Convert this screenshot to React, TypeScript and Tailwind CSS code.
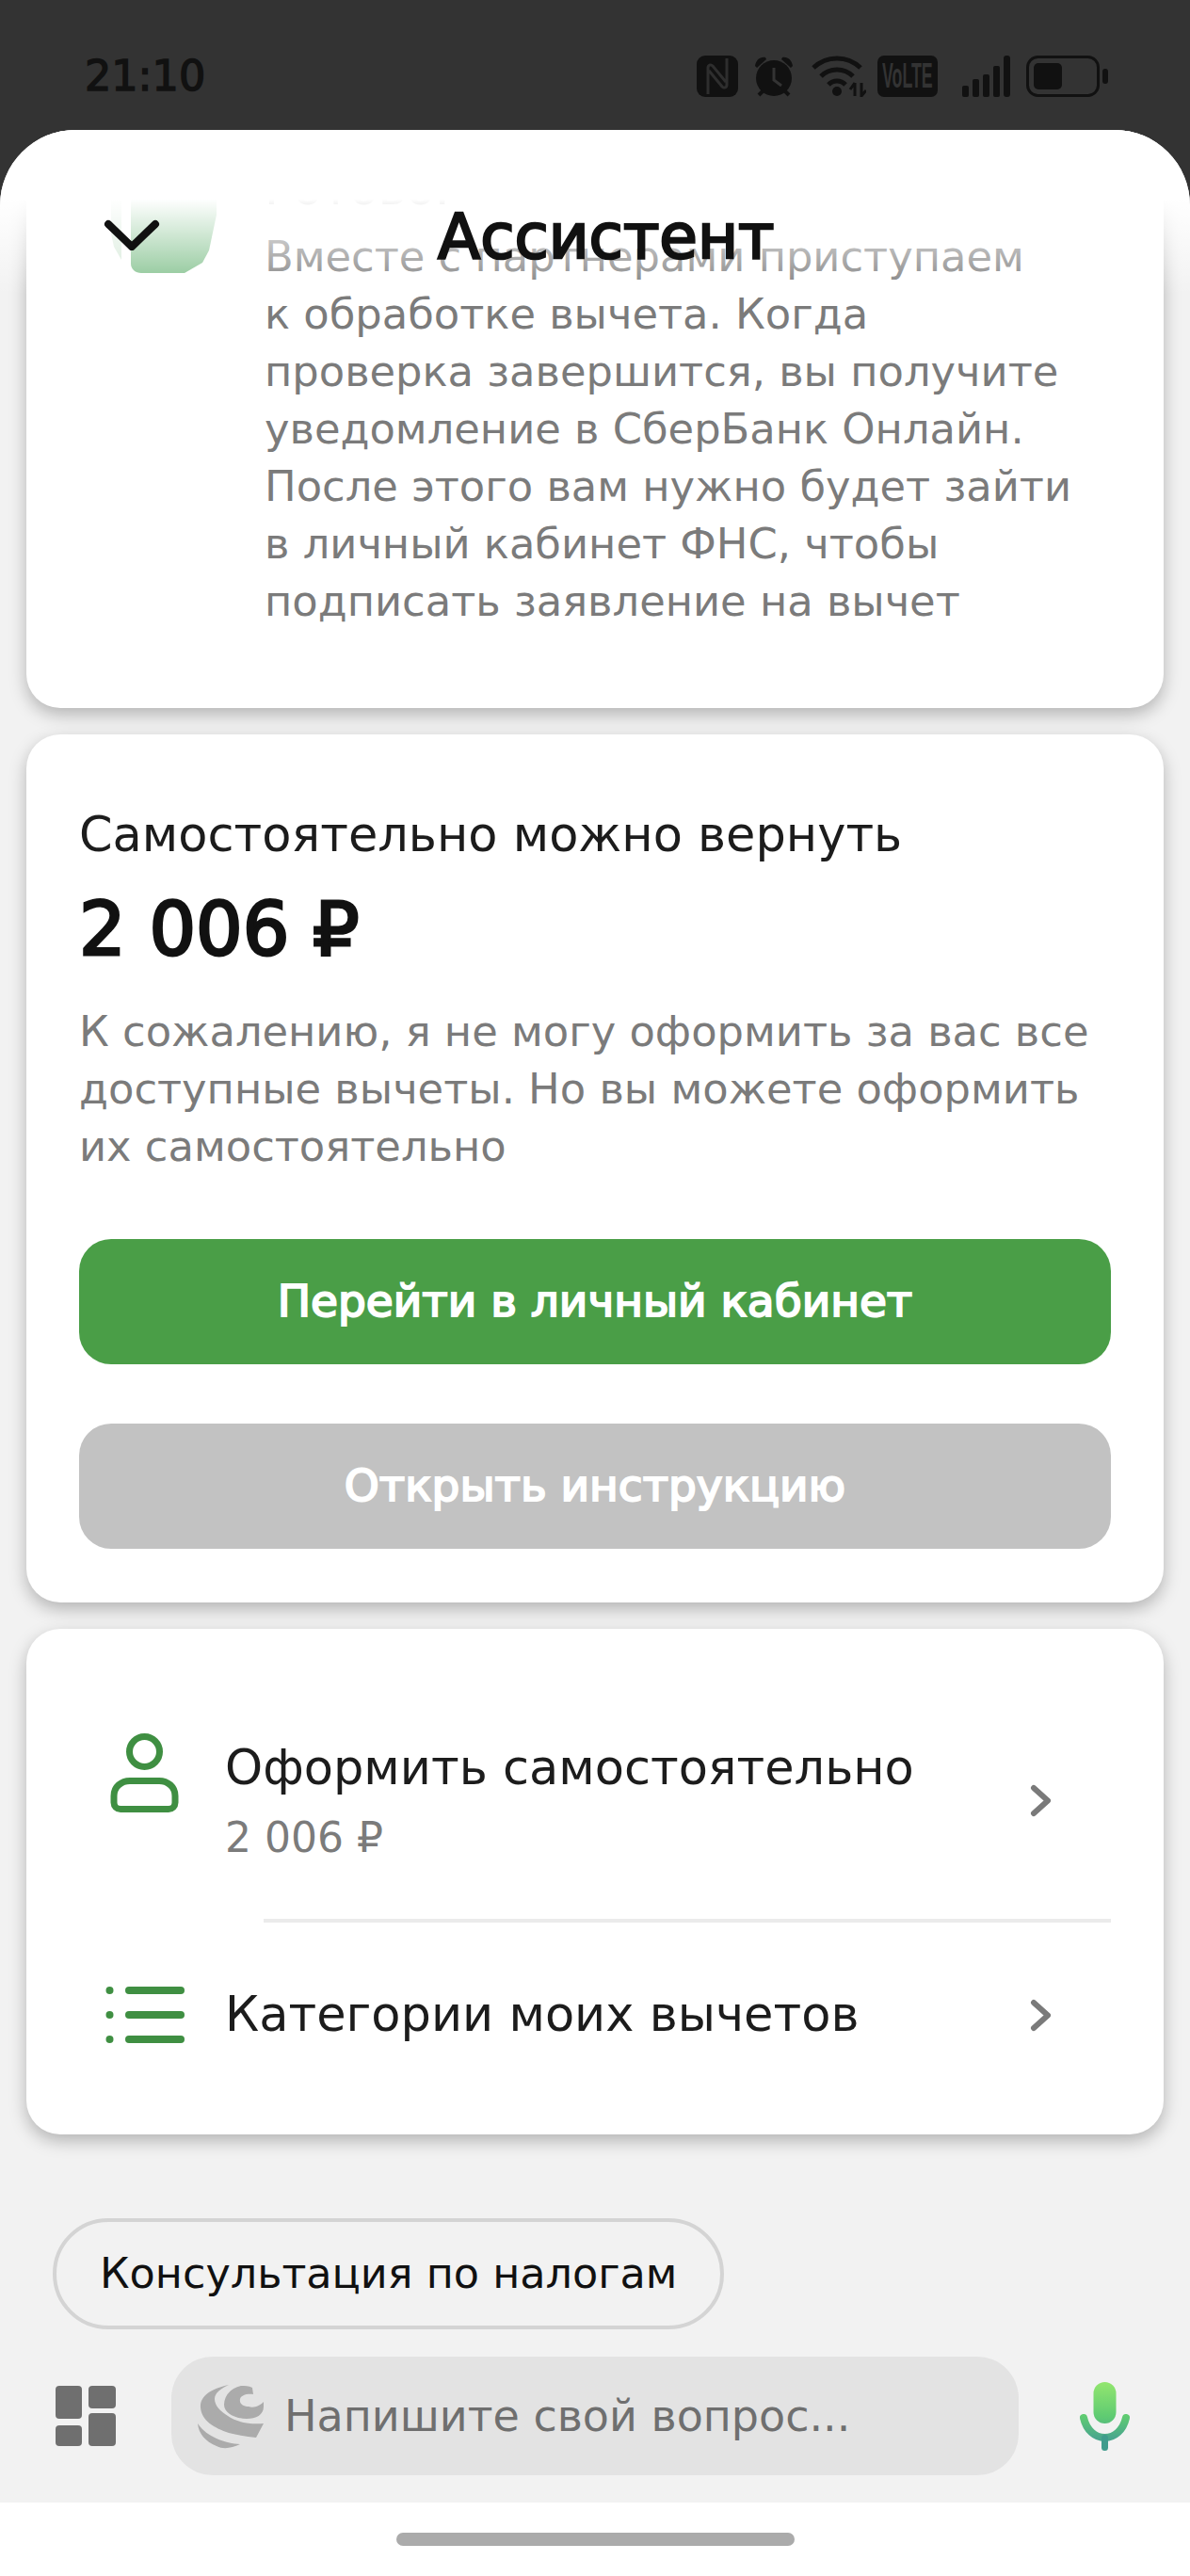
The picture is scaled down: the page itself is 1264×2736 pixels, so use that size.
const dv = "font-['DejaVu_Sans',sans-serif]";

function StatusIcons() {
  return (
    <div className="flex items-center text-[#111]">
      <svg width="44" height="44" viewBox="0 0 44 44">
        <rect width="44" height="44" rx="9" fill="#111" />
        <path d="M12 41V13c0-3 3-4 5-2L31 28M32 3V31c0 3-3 4-5 2L13 16" fill="none" stroke="#2e2e2e" strokeWidth="3" />
      </svg>
      <svg width="44" height="44" viewBox="0 0 44 44" className="ml-[17px]">
        <circle cx="21" cy="24" r="19" fill="#111" />
        <path d="M1 11C2 5 6 1 12 2L13 4 3 13zM41 11C40 5 36 1 30 2L29 4 39 13z" fill="#111" />
        <path d="M9 38l-4 4M33 38l4 4" stroke="#111" strokeWidth="4" />
        <path d="M21 13v13l8 6" fill="none" stroke="#333" strokeWidth="3" />
      </svg>
      <svg width="58" height="44" viewBox="0 0 58 44" className="ml-[17px]">
        <path d="M2 13a36 36 0 0 1 50 0M10 22a24 24 0 0 1 34 0M18 31a12 12 0 0 1 18 0" fill="none" stroke="#111" strokeWidth="5" />
        <circle cx="27" cy="38" r="5" fill="#111" />
        <path d="M46 29v14M41 36l5-7M53 29v14l5-6" fill="none" stroke="#111" strokeWidth="3" />
      </svg>
      <div className="ml-[12px] flex h-[44px] w-[64px] items-center justify-center overflow-hidden rounded-[7px] bg-[#111]">
        <span className="inline-block scale-x-[0.48] font-['Liberation_Sans',sans-serif] text-[37px] leading-[44px] font-bold whitespace-nowrap text-[#333]">VoLTE</span>
      </div>
      <svg width="51" height="44" viewBox="0 0 51 44" className="ml-[26px]">
        <rect x="0" y="32" width="7" height="12" rx="2" fill="#111" />
        <rect x="11" y="25" width="7" height="19" rx="2" fill="#111" />
        <rect x="22" y="20" width="7" height="24" rx="2" fill="#111" />
        <rect x="33" y="11" width="7" height="33" rx="2" fill="#111" />
        <rect x="44" y="0" width="7" height="44" rx="3" fill="#111" />
      </svg>
      <svg width="87" height="44" viewBox="0 0 87 44" className="ml-[17px]">
        <rect x="1.5" y="1.5" width="75" height="41" rx="11" fill="none" stroke="#111" strokeWidth="3" />
        <rect x="8" y="8" width="30" height="28" rx="5" fill="#111" />
        <rect x="81" y="14" width="6" height="16" rx="3" fill="#111" />
      </svg>
    </div>
  );
}

function Person() {
  return (
    <svg width="73" height="84" viewBox="0 0 73 84" fill="none" stroke="#3f8f42" strokeWidth="7">
      <circle cx="36.500" cy="19.500" r="16" />
      <path d="M11 80.500h51a7 7 0 0 0 7-7v-7c0-10-8-16-17-16H21c-9 0-17 6-17 16v7a7 7 0 0 0 7 7z" />
    </svg>
  );
}

function ListIcon() {
  return (
    <svg width="84" height="60" viewBox="0 0 84 60" fill="#3f8f42">
      <circle cx="4.500" cy="4" r="4" />
      <circle cx="4.500" cy="30" r="4" />
      <circle cx="4.500" cy="56" r="4" />
      <rect x="21" y="0" width="63" height="8" rx="4" />
      <rect x="21" y="26" width="63" height="8" rx="4" />
      <rect x="21" y="52" width="63" height="8" rx="4" />
    </svg>
  );
}

function Chevron() {
  return (
    <svg width="24" height="35" viewBox="0 0 24 35" fill="none" stroke="#7a7a7a" strokeWidth="6" strokeLinecap="round" strokeLinejoin="round">
      <path d="M4 4l15 13.500L4 31" />
    </svg>
  );
}

function Grid() {
  return (
    <svg width="64" height="64" viewBox="0 0 64 64" fill="#6f6f6f">
      <rect x="0" y="0" width="28" height="35" rx="4" />
      <rect x="0" y="42" width="28" height="22" rx="4" />
      <rect x="35" y="0" width="29" height="24" rx="4" />
      <rect x="35" y="29" width="29" height="35" rx="4" />
    </svg>
  );
}

function Logo() {
  return (
    <svg width="72" height="71" viewBox="0 0 72 71" fill="#ababab">
      <path d="M33 2C14 6 2 14 3 26C4 40 18 48 33 53C44 56 54 57 62 58L70 43C56 44 42 42 32 35C24 30 18 24 18 17C18 11 24 6 33 2Z" />
      <path d="M46 3C35 5 28 14 28 23C28 32 40 38 52 38C62 38 70 34 70 25L70 20C66 24 60 27 54 25C48 25 44 22 45 17C46 13 52 11 59 12L58 5C54 3 50 3 46 3Z" />
      <path d="M0 43C1 54 8 62 20 67C28 71 36 69 45 65C30 64 10 58 0 43Z" />
    </svg>
  );
}

function Mic() {
  return (
    <svg width="55" height="73" viewBox="0 0 55 73" fill="none">
      <defs>
        <linearGradient id="mic" gradientUnits="userSpaceOnUse" x1="0" y1="0" x2="0" y2="73">
          <stop offset="0" stopColor="#93e66f" />
          <stop offset="0.5" stopColor="#5fcb72" />
          <stop offset="0.8" stopColor="#4aa88c" />
          <stop offset="1" stopColor="#3f9c8c" />
        </linearGradient>
      </defs>
      <rect x="15.500" y="0" width="24" height="44" rx="12" fill="url(#mic)" />
      <path d="M5 38c3 13 12 21 22.500 21S47 51 50 38" stroke="url(#mic)" strokeWidth="8" strokeLinecap="round" />
      <rect x="24" y="56" width="7" height="17" rx="3.500" fill="#3f9c8c" />
    </svg>
  );
}

function BlurIcon() {
  return (
    <svg width="112" height="118" viewBox="0 0 112 118" fill="none">
      <path d="M0 0h11v104l-8-14-3-14z" fill="#d3e8d6" />
      <path d="M21 0h91v56l-8 38-7 13-19 11H32c-6 0-11-4-11-10z" fill="#7fbf8a" />
    </svg>
  );
}

const cardShadow = "shadow-[0_7px_18px_rgba(0,0,0,0.26)]";

export default function App() {
  return (
    <div className={`flex h-[2736px] w-[1264px] flex-col overflow-hidden bg-[#333333] ${dv}`}>
      <div className="flex h-[138px] shrink-0 items-start justify-between pt-[59px] pl-[90px] pr-[87px]">
        <div className="text-[44.500px] leading-[44px] text-[#111] [-webkit-text-stroke:1.5px_#111]">21:10</div>
        <StatusIcons />
      </div>

      <div className="relative flex min-h-0 flex-1 flex-col overflow-hidden rounded-t-[80px] bg-[#f2f2f2]">
        {/* header overlay */}
        <div className="absolute inset-x-0 top-0 z-10 h-[175px] bg-gradient-to-b from-white from-[42%] to-transparent">
          <svg width="60" height="33" viewBox="0 0 60 33" fill="none" stroke="#111" strokeWidth="8" strokeLinecap="round" strokeLinejoin="round" className="absolute left-[110px] top-[95px]">
            <path d="M5 5l25 24L55 5" />
          </svg>
          <div className="absolute left-[465px] top-[76px] text-[66px] leading-[76px] text-[#111] [-webkit-text-stroke:2.5px_#111]">Ассистент</div>
        </div>

        <div className="flex flex-col gap-[28px] px-[28px]">
          {/* first card, scrolled */}
          <div className={`flex h-[614px] shrink-0 flex-col justify-end rounded-[36px] bg-white pb-[83px] ${cardShadow}`}>
            <div className="flex">
              <div className="ml-[90px] mt-[3px] w-[112px] shrink-0 self-start"><BlurIcon /></div>
              <div className="ml-[51px] text-[44.800px] leading-[61px] text-[#7b7b7b]">
                <div className="mb-[11px] text-[50px] leading-[62px] text-[#1c1c1c]">Готово.</div>
                Вместе с партнерами приступаем<br />
                к обработке вычета. Когда<br />
                проверка завершится, вы получите<br />
                уведомление в СберБанк Онлайн.<br />
                После этого вам нужно будет зайти<br />
                в личный кабинет ФНС, чтобы<br />
                подписать заявление на вычет
              </div>
            </div>
          </div>

          {/* second card */}
          <div className={`flex h-[922px] shrink-0 flex-col rounded-[36px] bg-white px-[56px] pt-[76px] ${cardShadow}`}>
            <div className="text-[51px] leading-[62px] text-[#1c1c1c]">Самостоятельно можно вернуть</div>
            <div className="mt-[25px] text-[78px] leading-[88px] text-[#111] [-webkit-text-stroke:3px_#111]">2 006 ₽</div>
            <div className="mt-[34px] text-[44.800px] leading-[61px] text-[#7b7b7b]">
              К сожалению, я не могу оформить за вас все<br />
              доступные вычеты. Но вы можете оформить<br />
              их самостоятельно
            </div>
            <div className="mt-[68px] flex h-[133px] items-center justify-center rounded-[34px] bg-[#4a9e47] text-[47px] text-white [-webkit-text-stroke:2px_#fff]">
              Перейти в личный кабинет
            </div>
            <div className="mt-[63px] flex h-[133px] items-center justify-center rounded-[34px] bg-[#c2c2c2] text-[47px] text-white [-webkit-text-stroke:2px_#fff]">
              Открыть инструкцию
            </div>
          </div>

          {/* third card */}
          <div className={`flex h-[537px] shrink-0 flex-col rounded-[36px] bg-white ${cardShadow}`}>
            <div className="flex h-[308px] shrink-0 items-center pt-[56px] pr-[118px]">
              <div className="ml-[89px] flex w-[122px] shrink-0 self-start pt-[55px]"><Person /></div>
              <div className="flex-1">
                <div className="text-[51px] leading-[66px] text-[#1c1c1c]">Оформить самостоятельно</div>
                <div className="mt-[13px] text-[44px] leading-[56px] text-[#7b7b7b]">2 006 ₽</div>
              </div>
              <Chevron />
            </div>
            <div className="ml-[252px] mr-[56px] h-[4px] bg-[#ebebeb]" />
            <div className="flex h-[196px] items-center pr-[118px]">
              <div className="ml-[84px] w-[127px] shrink-0"><ListIcon /></div>
              <div className="flex-1 text-[51px] leading-[66px] text-[#1c1c1c]">Категории моих вычетов</div>
              <Chevron />
            </div>
          </div>
        </div>

        {/* chip */}
        <div className="mt-[89px] pl-[56px]">
          <div className="inline-flex h-[118px] items-center rounded-full border-[4px] border-[#d4d4d4] px-[46px] text-[44.500px] text-[#111]">
            Консультация по налогам
          </div>
        </div>

        {/* input */}
        <div className="mt-[29px] flex items-center pl-[59px]">
          <Grid />
          <div className="ml-[59px] flex h-[126px] w-[900px] items-center rounded-[44px] bg-[#e3e3e3] pl-[28px]">
            <Logo />
            <span className="ml-[20px] text-[46px] text-[#6f6f6f]">Напишите свой вопрос...</span>
          </div>
          <div className="ml-[64px]"><Mic /></div>
        </div>

        {/* nav */}
        <div className="mt-auto flex h-[78px] shrink-0 justify-center bg-white pt-[32px]">
          <div className="h-[14px] w-[423px] rounded-full bg-[#ababab]" />
        </div>
      </div>
    </div>
  );
}
